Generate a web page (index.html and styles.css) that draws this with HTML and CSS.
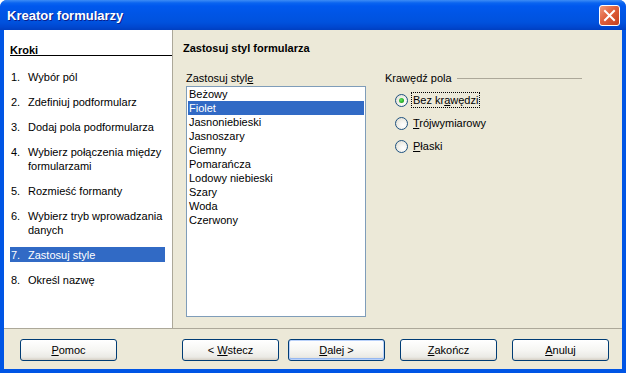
FILE: index.html
```html
<!DOCTYPE html>
<html lang="pl">
<head>
    <meta charset="UTF-8">
    <title>Kreator formularzy</title>
    <link rel="stylesheet" href="styles.css">
</head>
<body>
    <div class="window">
        <div class="titlebar">
            <span class="title">Kreator formularzy</span>
            <button class="close-btn" aria-label="Zamknij">
                <svg width="13" height="13" viewBox="0 0 13 13">
                    <path d="M2 2 L11 11 M11 2 L2 11" stroke="#fff" stroke-width="2" stroke-linecap="square"/>
                </svg>
            </button>
        </div>
        <div class="frame">
            <div class="main">
                <div class="steps-panel">
                    <div class="steps-title">Kroki</div>
                    <ol class="steps">
                        <li><span class="num">1.</span><span>Wybór pól</span></li>
                        <li><span class="num">2.</span><span>Zdefiniuj podformularz</span></li>
                        <li><span class="num">3.</span><span>Dodaj pola podformularza</span></li>
                        <li><span class="num">4.</span><span>Wybierz połączenia między formularzami</span></li>
                        <li><span class="num">5.</span><span>Rozmieść formanty</span></li>
                        <li><span class="num">6.</span><span>Wybierz tryb wprowadzania danych</span></li>
                        <li class="current"><span class="num">7.</span><span>Zastosuj style</span></li>
                        <li><span class="num">8.</span><span>Określ nazwę</span></li>
                    </ol>
                </div>
                <div class="content">
                    <h1 class="page-title">Zastosuj styl formularza</h1>
                    <div class="columns">
                        <div class="style-col">
                            <div class="field-label">Zastosuj styl<u>e</u></div>
                            <ul class="listbox">
                                <li>Beżowy</li>
                                <li class="selected">Fiolet</li>
                                <li>Jasnoniebieski</li>
                                <li>Jasnoszary</li>
                                <li>Ciemny</li>
                                <li>Pomarańcza</li>
                                <li>Lodowy niebieski</li>
                                <li>Szary</li>
                                <li>Woda</li>
                                <li>Czerwony</li>
                            </ul>
                        </div>
                        <div class="border-col">
                            <div class="group-head"><span>Krawędź pola</span><span class="group-line"></span></div>
                            <div class="radio">
                                <span class="radio-dot checked"></span>
                                <span class="radio-label focused">Bez kr<u>a</u>wędzi</span>
                            </div>
                            <div class="radio">
                                <span class="radio-dot"></span>
                                <span class="radio-label"><u>T</u>rójwymiarowy</span>
                            </div>
                            <div class="radio">
                                <span class="radio-dot"></span>
                                <span class="radio-label"><u>P</u>łaski</span>
                            </div>
                        </div>
                    </div>
                </div>
            </div>
            <div class="footer">
                <button class="btn"><u>P</u>omoc</button>
                <button class="btn btn-back">&lt; <u>W</u>stecz</button>
                <button class="btn btn-default"><u>D</u>alej &gt;</button>
                <button class="btn btn-wide"><u>Z</u>akończ</button>
                <button class="btn btn-wide"><u>A</u>nuluj</button>
            </div>
        </div>
    </div>
</body>
</html>
```

FILE: styles.css
```css
body {
    margin: 0;
    padding: 0;
    font-family: "Liberation Sans", Arial, sans-serif;
    font-size: 11px;
    color: #000;
    background-color: #fff;
}

.window {
    width: 626px;
    height: 373px;
    display: flex;
    flex-direction: column;
    overflow: hidden;
    border-radius: 7px 7px 0 0;
    background-color: #0055e5;
}

/* Title bar */
.titlebar {
    height: 30px;
    flex-shrink: 0;
    display: flex;
    align-items: center;
    justify-content: space-between;
    padding: 0 6px 0 7px;
    box-sizing: border-box;
    background: linear-gradient(to bottom, #3d8cf5 0px, #0a64f0 3px, #0058ee 6px, #0055e5 14px, #0052de 22px, #0047d0 27px, #003fc0 30px);
}

.title {
    color: #fff;
    font-weight: bold;
    font-size: 13px;
    text-shadow: 1px 1px 0 #0a1e8c;
    padding-top: 1px;
}

.close-btn {
    width: 21px;
    height: 21px;
    padding: 0;
    border: 1px solid #fff;
    border-radius: 3px;
    background: linear-gradient(135deg, #f19a7c 0%, #e0603c 45%, #c5401c 100%);
    display: flex;
    align-items: center;
    justify-content: center;
    margin-top: 1px;
}

/* Frame */
.frame {
    flex-grow: 1;
    display: flex;
    flex-direction: column;
    margin: 0 4px 4px 4px;
    background-color: #ece9d8;
}

.main {
    height: 298px;
    display: flex;
    border-bottom: 1px solid #aca899;
}

/* Steps */
.steps-panel {
    width: 169px;
    background-color: #fff;
    border-right: 1px solid #aca899;
    padding: 14px 0 0 6px;
    box-sizing: border-box;
}

.steps-title {
    font-weight: bold;
    border-bottom: 1px solid #000;
    padding-bottom: 0;
    line-height: 13px;
    height: 11px;
}

.steps {
    list-style: none;
    margin: 14px 0 0 0;
    padding: 0;
    width: 155px;
}

.steps li {
    display: flex;
    line-height: 14px;
    margin-bottom: 11px;
    padding-left: 1px;
}

.steps .num {
    width: 17px;
    flex-shrink: 0;
}

.steps li.current {
    background-color: #316ac5;
    color: #fff;
    padding-top: 1px;
    margin-top: -1px;
}

/* Content */
.content {
    flex-grow: 1;
    padding: 12px 0 0 10px;
}

.page-title {
    margin: 0;
    font-size: 11px;
    font-weight: bold;
    line-height: 13px;
}

.columns {
    display: flex;
    margin-top: 17px;
}

.style-col {
    margin-left: 3px;
    width: 180px;
}

.field-label {
    line-height: 13px;
    margin-bottom: 1px;
}

.listbox {
    list-style: none;
    margin: 0;
    padding: 0 1px;
    height: 229px;
    background-color: #fff;
    border: 1px solid #7f9db9;
}

.listbox li {
    line-height: 14px;
    padding-left: 1px;
}

.listbox li.selected {
    background-color: #316ac5;
    color: #fff;
}

.border-col {
    margin-left: 19px;
    width: 197px;
}

.group-head {
    display: flex;
    align-items: center;
    line-height: 13px;
}

.group-line {
    flex-grow: 1;
    height: 1px;
    background-color: #aca899;
    margin-left: 5px;
}

.radio {
    display: flex;
    align-items: center;
    margin-left: 10px;
    height: 16px;
    margin-top: 7px;
}

.radio:first-of-type {
    margin-top: 6px;
}

.radio-dot {
    width: 11px;
    height: 11px;
    border: 1px solid #1c5180;
    border-radius: 50%;
    background: radial-gradient(circle at 65% 65%, #fff 0%, #f4f3ee 40%, #dcd9cb 100%);
    position: relative;
    flex-shrink: 0;
}

.radio-dot.checked::after {
    content: "";
    position: absolute;
    left: 3px;
    top: 3px;
    width: 5px;
    height: 5px;
    border-radius: 50%;
    background: radial-gradient(circle at 40% 40%, #5ce85c 0%, #21a121 70%, #1a8a1a 100%);
}

.radio-label {
    margin-left: 3px;
    padding: 0 1px;
    line-height: 14px;
    border: 1px solid transparent;
}

.radio-label.focused {
    border: 1px dotted #000;
}

/* Footer */
.footer {
    flex-grow: 1;
    display: flex;
    align-items: flex-start;
    padding: 10px 0 0 16px;
}

.btn {
    width: 97px;
    height: 22px;
    padding: 0;
    font-family: "Liberation Sans", Arial, sans-serif;
    font-size: 11px;
    color: #000;
    border: 1px solid #003c74;
    border-radius: 3px;
    background: linear-gradient(to bottom, #fff 0%, #f6f6f3 50%, #ebeae5 85%, #d6d0c5 100%);
}

.btn-back {
    margin-left: 65px;
}

.btn-default {
    margin-left: 9px;
    box-shadow: inset 0 0 0 1px #b9d1fa, inset 0 -1px 0 1px #97b8f0;
}

.btn-wide {
    margin-left: 15px;
}
```
